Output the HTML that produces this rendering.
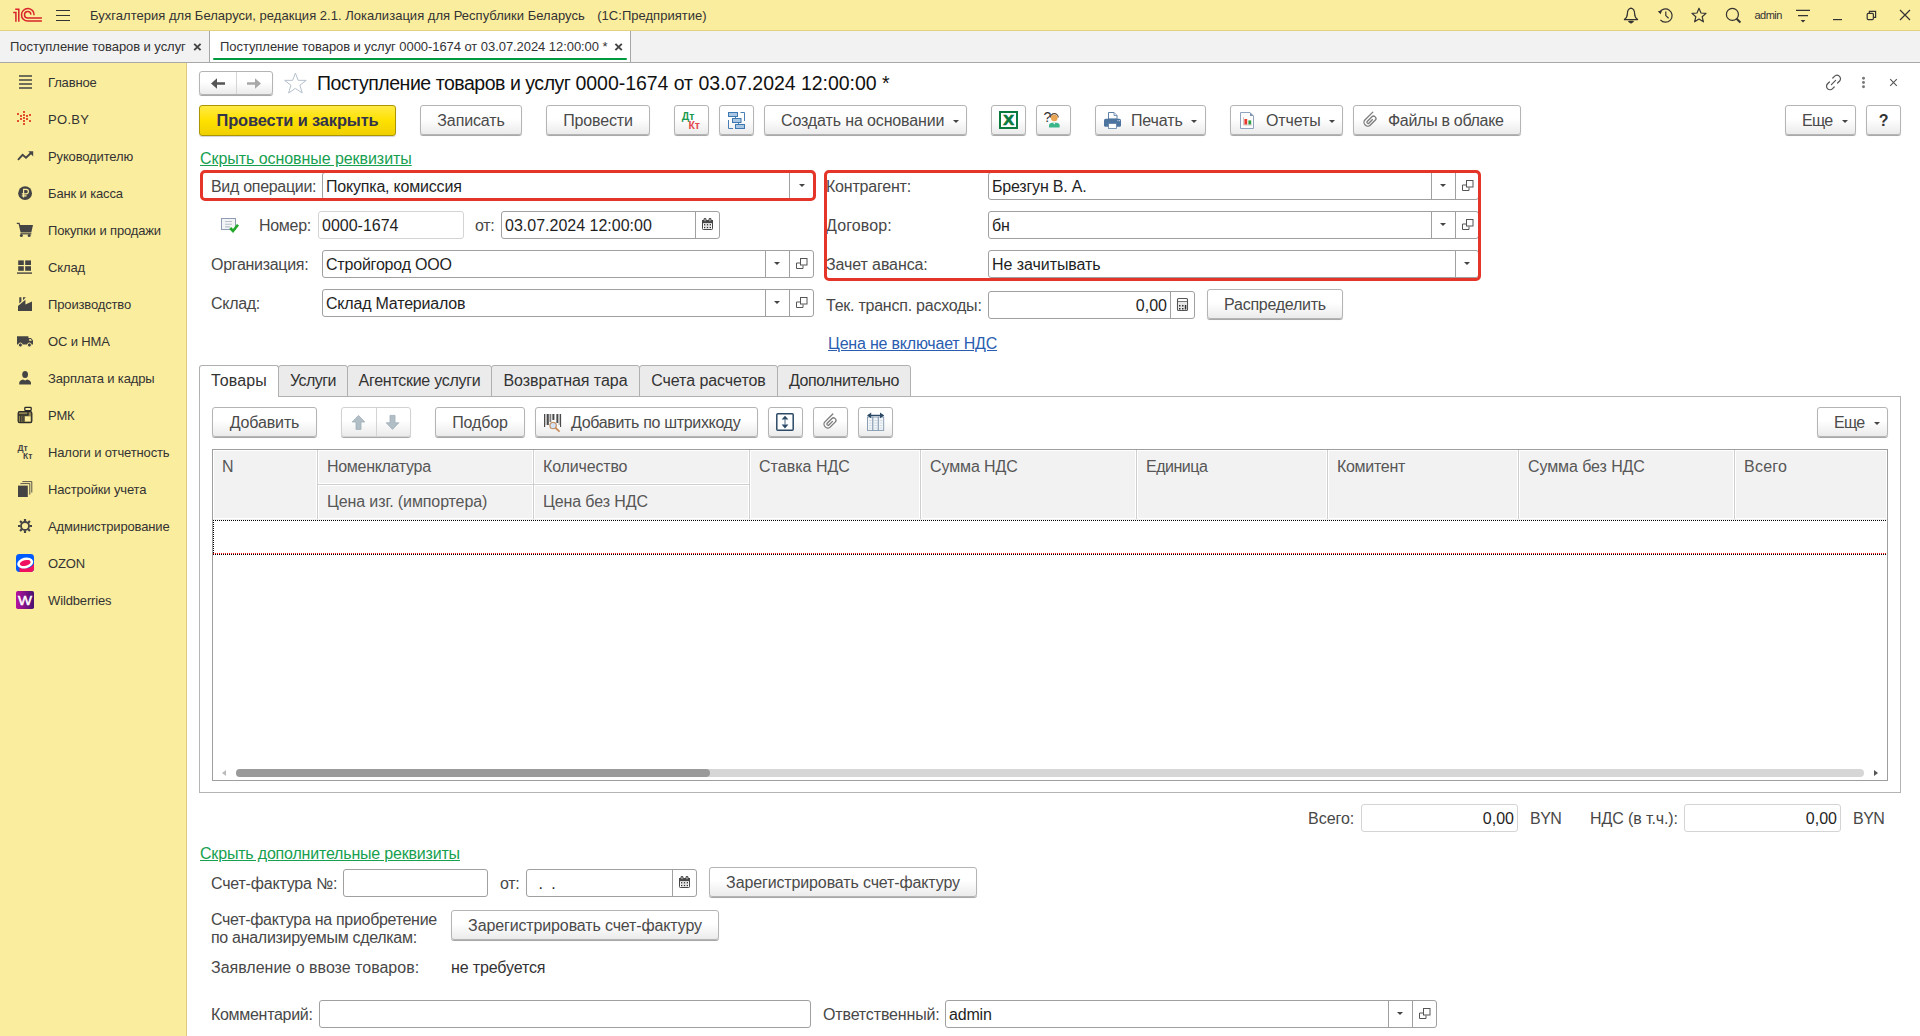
<!DOCTYPE html>
<html lang="ru">
<head>
<meta charset="utf-8">
<title>Поступление товаров и услуг</title>
<style>
*{box-sizing:border-box;margin:0;padding:0}
html,body{width:1920px;height:1036px;overflow:hidden;background:#fff}
body{font-family:"Liberation Sans",Arial,sans-serif;font-size:16px;letter-spacing:-0.13px;color:#333;position:relative}
.abs,.btn,.fld,.lbl,.t{position:absolute;white-space:nowrap}
#topbar{position:absolute;left:0;top:0;width:1920px;height:31px;background:#fbed9e;border-bottom:1px solid #e3d27e;letter-spacing:0}
#tabbar{position:absolute;left:0;top:31px;width:1920px;height:32px;background:#f2f2f2;border-bottom:1px solid #a8a8a8;letter-spacing:0}
#sidebar{position:absolute;left:0;top:63px;width:187px;height:973px;background:#fbed9e;border-right:1px solid #dccb7c;letter-spacing:0}
.t13{font-size:13px;color:#333}
.sb{position:absolute;left:48px;font-size:13px;color:#333;line-height:16px;white-space:nowrap;letter-spacing:-0.14px}
.ico{position:absolute}
.btn{height:30px;border:1px solid #b4b4b4;border-radius:3px;background:linear-gradient(#ffffff 0%,#ffffff 45%,#ebebeb 100%);box-shadow:0 1px 0 rgba(0,0,0,.26),0 1px 1px rgba(0,0,0,.12);color:#4a4a4a;text-align:center;line-height:29px}
.fld{height:28px;border:1px solid #a0a0a0;border-radius:3px;background:#fff;color:#1f1f1f;line-height:27px;padding-left:3px;letter-spacing:-0.2px;overflow:hidden}
.fld.lt{border-color:#d4d4d4}
.fld .sep{position:absolute;top:0;bottom:0;width:1px;background:#a0a0a0}
.lbl{line-height:29px;color:#484848;letter-spacing:-0.3px}
.lnk{position:absolute;white-space:nowrap;text-decoration:underline;line-height:18px}
.dd{position:absolute;width:0;height:0;border-left:3.5px solid transparent;border-right:3.5px solid transparent;border-top:3.5px solid #444}
.num{text-align:right;padding-right:3px;padding-left:0}
.hd{position:absolute;color:#575757;line-height:18px;white-space:nowrap;letter-spacing:-0.3px}
.vl{position:absolute;width:1px;background:#dcdcdc}
</style>
</head>
<body>
<div id="topbar">
<svg class="ico" style="left:0;top:0" width="80" height="31" viewBox="0 0 80 31" fill="none" stroke="#d8232a" stroke-width="1.5">
<path d="M15.2 9.3 H18.8 V21.8"/>
<path d="M13.2 12.4 H15.9 V21.8"/>
<path d="M34.1 15.2 A6.3 6.3 0 1 0 27.8 21.1 H41.9"/>
<path d="M30.9 14.6 A3.2 3.2 0 1 0 27.8 18 H41.9"/>
<path d="M56 10.5H70M56 15.5H70M56 20.5H70" stroke="#333" stroke-width="1.2"/>
</svg>
<div class="t t13" style="left:90px;top:8px;line-height:16px;letter-spacing:0.02px">Бухгалтерия для Беларуси, редакция 2.1. Локализация для Республики Беларусь<span style="margin-left:12.5px">(1С:Предприятие)</span></div>
<!-- bell -->
<svg class="ico" style="left:1623px;top:7px" width="16" height="17" viewBox="0 0 16 17" fill="none" stroke="#333" stroke-width="1.2" stroke-linejoin="round"><path d="M8 1.2 C5.2 1.8 4.4 4.2 4.4 6.6 C4.4 9.6 3 11.4 1.4 12.6 H14.6 C13 11.4 11.6 9.6 11.6 6.6 C11.6 4.2 10.8 1.8 8 1.2Z"/><path d="M5.8 14.4 H10.2 L8 16Z" fill="#333"/></svg>
<!-- history -->
<svg class="ico" style="left:1657px;top:7px" width="17" height="17" viewBox="0 0 17 17" fill="none" stroke="#333" stroke-width="1.2"><path d="M2.6 5.6 A6.6 6.6 0 1 1 3.4 12.8"/><path d="M8.8 4.4 V8.6 L11.6 11.2"/><path d="M0.8 4.2 L3.6 7.2 L5 3.4Z" fill="#333" stroke="none"/></svg>
<!-- star -->
<svg class="ico" style="left:1691px;top:7px" width="16" height="16" viewBox="0 0 16 16" fill="none" stroke="#333" stroke-width="1.2" stroke-linejoin="round"><path d="M8 1.2 L10 6 L15 6.4 L11.2 9.8 L12.4 14.8 L8 12.1 L3.6 14.8 L4.8 9.8 L1 6.4 L6 6Z"/></svg>
<!-- search -->
<svg class="ico" style="left:1725px;top:7px" width="17" height="17" viewBox="0 0 17 17" fill="none" stroke="#333" stroke-width="1.2"><circle cx="7.4" cy="7.4" r="6"/><path d="M11.6 11.8 L15.4 15.4" stroke-width="2"/></svg>
<div class="t" style="left:1754.5px;top:8px;font-size:11px;letter-spacing:-0.55px;line-height:14px;color:#333">admin</div>
<svg class="ico" style="left:1795px;top:8px" width="16" height="16" viewBox="0 0 16 16" stroke="#333" stroke-width="1.2"><path d="M1 2.4H15M3 7.6H13"/><path d="M5.6 12 H10.4 L8 14.6Z" fill="#333" stroke="none"/></svg>
<svg class="ico" style="left:1832px;top:14px" width="12" height="8" viewBox="0 0 12 8" stroke="#333" stroke-width="1.2"><path d="M1 5.6H10"/></svg>
<svg class="ico" style="left:1866px;top:10px" width="11" height="11" viewBox="0 0 11 11" fill="none" stroke="#333" stroke-width="1.2"><path d="M3.4 3.2 V1.4 H9.6 V7.4 H7.6"/><rect x="1.2" y="3.4" width="6.2" height="6.2" rx="1"/></svg>
<svg class="ico" style="left:1899px;top:9px" width="12" height="12" viewBox="0 0 12 12" stroke="#333" stroke-width="1.2"><path d="M1 1 L11 11 M11 1 L1 11"/></svg>
</div>
<div id="tabbar">
<div class="t t13" style="left:10px;top:8px;line-height:16px;letter-spacing:-0.06px">Поступление товаров и услуг</div>
<svg class="ico" style="left:193px;top:11px" width="10" height="10" viewBox="0 0 10 10" stroke="#444" stroke-width="1.9"><path d="M1.2 1.8L7.6 8.2M7.6 1.8L1.2 8.2"/></svg>
<div class="abs" style="left:209px;top:0;width:1px;height:31px;background:#a6a6a6"></div>
<div class="abs" style="left:210px;top:0;width:420px;height:31px;background:#fff"></div>
<div class="abs" style="left:630px;top:0;width:1px;height:31px;background:#a6a6a6"></div>
<div class="abs" style="left:213px;top:27px;width:414px;height:2px;background:#009a3e;border-radius:1px"></div>
<div class="t t13" style="left:220px;top:8px;line-height:16px;letter-spacing:-0.06px">Поступление товаров и услуг 0000-1674 от 03.07.2024 12:00:00 *</div>
<svg class="ico" style="left:613px;top:11px" width="11" height="10" viewBox="0 0 11 10" stroke="#444" stroke-width="1.9"><path d="M2.4 1.8L8.8 8.2M8.8 1.8L2.4 8.2"/></svg>
</div>
<div id="sidebar">
<svg class="ico" style="left:0;top:0" width="187" height="973" viewBox="0 63 187 973">
<g stroke="#444" stroke-width="1.6"><path d="M19 76H32M19 80H32M19 84H32M19 88H32"/></g>
<g fill="#e3502e"><rect x="23" y="111" width="2" height="2"/><rect x="17" y="113" width="2" height="2"/><rect x="29" y="114" width="2" height="2"/><rect x="20" y="115" width="2" height="2"/><rect x="23" y="114" width="2" height="2"/><rect x="26" y="115" width="2" height="2"/><rect x="23" y="117" width="2" height="2"/><rect x="20" y="118" width="2" height="2"/><rect x="26" y="118" width="2" height="2"/><rect x="17" y="120" width="2" height="2"/><rect x="23" y="120" width="2" height="2"/><rect x="29" y="120" width="2" height="2"/><rect x="23" y="123" width="2" height="2"/></g>
<g fill="none" stroke="#444" stroke-width="1.9"><path d="M18 159.8 L22.6 154.9 L26 157.8 L31.2 152.8"/></g>
<path d="M28.2 151.2 H33.2 V156.4Z" fill="#444"/>
<circle cx="25.1" cy="193.2" r="6.9" fill="#444"/>
<g fill="none" stroke="#fbed9e" stroke-width="1.2"><path d="M23.6 197.6 V189.4 H26.2 A2.2 2.2 0 0 1 26.2 193.8 H21.8 M21.8 195.8 H26.6"/></g>
<!-- cart -->
<g fill="#444"><path d="M16.8 222.8 H19.6 L20.2 225 H33 L31.3 232.4 H20.6 L18.6 224 H16.8Z"/><rect x="20.4" y="233.2" width="11" height="1.2"/><circle cx="21.4" cy="235.6" r="1.5"/><circle cx="29.2" cy="235.6" r="1.5"/></g>
<!-- sklad -->
<g fill="#444"><rect x="18.2" y="260.4" width="5.6" height="4.6"/><rect x="25.2" y="260.4" width="5.8" height="4.6"/><rect x="18.2" y="266.2" width="5.6" height="4.6"/><rect x="25.2" y="266.2" width="5.8" height="4.6"/><rect x="17" y="272.4" width="15" height="1.4"/></g>
<!-- factory -->
<g fill="#444"><path d="M18 311 V306 L25.4 299.8 V304.6 L32 301.6 V311Z"/><path d="M19.3 297.2 H21.4 V301.6 L19.3 303.6Z"/><path d="M23 297.2 H25.8 L23 300.2Z"/></g>
<!-- truck -->
<g fill="#444"><path d="M17 336.2 H28.4 V338 H31 L33 340.6 V344.4 H17Z"/><circle cx="20.4" cy="345" r="2" stroke="#fbed9e" stroke-width="0.9"/><circle cx="29.4" cy="345" r="2" stroke="#fbed9e" stroke-width="0.9"/></g>
<path d="M29.2 339 H30.6 L32 340.8 H29.2Z" fill="#fbed9e"/>
<!-- person -->
<g fill="#444"><ellipse cx="25.1" cy="374.4" rx="2.9" ry="3.5"/><path d="M19.2 384.6 V383 C19.2 381.2 21 380.4 23 379.6 L25.1 380.6 L27.2 379.6 C29.2 380.4 31 381.2 31 383 V384.6Z"/></g>
<!-- rmk -->
<g fill="none" stroke="#2a2a2a" stroke-width="1.3"><rect x="18.2" y="411.6" width="13.6" height="11" rx="1.6" fill="#8f8350"/><rect x="24.8" y="407.4" width="6.4" height="3.2" rx="0.8" fill="#fbed9e"/><path d="M18.6 415 H28 V412"/><path d="M28 410.6 V412"/></g>
<g fill="#fbed9e"><rect x="25" y="416.4" width="5.6" height="5"/></g>
<g stroke="#2a2a2a" stroke-width="0.9"><path d="M20.6 416 V421.8 M22.2 416 V421.8 M23.8 416 V421.8"/></g>
<!-- dt kt -->
<g fill="#444" font-family="Liberation Sans, sans-serif" font-weight="bold" font-size="8.5"><text x="17.4" y="451.4">Дт</text><text x="23" y="459">Кт</text></g>
<!-- pages -->
<g fill="none" stroke="#444" stroke-width="0.9"><path d="M22.4 481.6 H31.8 V492.6"/><path d="M20.4 483.6 H29.8 V494.6"/></g>
<rect x="18" y="485.6" width="9.8" height="11.4" fill="#444"/>
<!-- gear -->
<g fill="none" stroke="#444"><circle cx="25" cy="526" r="4" stroke-width="1.8"/><g stroke-width="2.2"><path d="M25 519 V521.4 M25 530.6 V533 M18 526 H20.4 M29.6 526 H32 M20.05 521.05 L21.75 522.75 M28.25 529.25 L29.95 530.95 M20.05 530.95 L21.75 529.25 M28.25 522.75 L29.95 521.05"/></g></g>
<!-- ozon -->
<defs><clipPath id="oz"><rect x="16" y="554" width="18" height="18" rx="3.4"/></clipPath>
<linearGradient id="wb" x1="0" y1="0" x2="1" y2="0"><stop offset="0" stop-color="#b7129f"/><stop offset="1" stop-color="#46126f"/></linearGradient></defs>
<g clip-path="url(#oz)"><rect x="16" y="554" width="18" height="18" fill="#005bff"/><path d="M34 563.6 C32 568 26 569.4 19.4 567.4 V572 H34Z" fill="#f1105f"/>
<ellipse cx="25.2" cy="563" rx="8.1" ry="5.3" transform="rotate(-14 25.2 563)" fill="#fff"/><ellipse cx="25.2" cy="563" rx="5.5" ry="2.9" transform="rotate(-14 25.2 563)" fill="#f1105f"/></g>
<!-- wb -->
<rect x="16" y="591" width="18" height="18" rx="1.8" fill="url(#wb)"/>
<text x="18" y="604.8" textLength="14" lengthAdjust="spacingAndGlyphs" font-family="Liberation Sans, sans-serif" font-size="13.4" fill="#fff" stroke="#fff" stroke-width="0.45">W</text>
</svg>
<div class="sb" style="top:12px">Главное</div>
<div class="sb" style="top:49px;letter-spacing:0.3px">PO.BY</div>
<div class="sb" style="top:86px">Руководителю</div>
<div class="sb" style="top:123px">Банк и касса</div>
<div class="sb" style="top:160px">Покупки и продажи</div>
<div class="sb" style="top:197px">Склад</div>
<div class="sb" style="top:234px">Производство</div>
<div class="sb" style="top:271px">ОС и НМА</div>
<div class="sb" style="top:308px">Зарплата и кадры</div>
<div class="sb" style="top:345px">РМК</div>
<div class="sb" style="top:382px">Налоги и отчетность</div>
<div class="sb" style="top:419px">Настройки учета</div>
<div class="sb" style="top:456px">Администрирование</div>
<div class="sb" style="top:493px">OZON</div>
<div class="sb" style="top:530px">Wildberries</div>
</div>
<div id="main">
<div class="btn" style="left:199px;top:71px;width:74px;height:24px"></div>
<div class="abs" style="left:236px;top:72px;width:1px;height:22px;background:#d5d5d5"></div>
<svg class="ico" style="left:209px;top:76px" width="18" height="15" viewBox="0 0 18 15"><path d="M16 6.2 H8 V2.3 L2 7.5 L8 12.7 V8.8 H16Z" fill="#555"/></svg>
<svg class="ico" style="left:245px;top:76px" width="18" height="15" viewBox="0 0 18 15"><path d="M2 6.2 H10 V2.3 L16 7.5 L10 12.7 V8.8 H2Z" fill="#a8a8a8"/></svg>
<svg class="ico" style="left:283px;top:71px" width="26" height="24" viewBox="0 0 26 24" fill="#fff" stroke="#b6c1cd" stroke-width="1" stroke-linejoin="miter"><path d="M12.4 2 L15.1 9.3 L23.2 9.4 L16.9 14.2 L19.2 22 L12.4 17.4 L5.6 22 L7.9 14.2 L1.6 9.4 L9.7 9.3Z"/></svg>
<div class="t" style="left:317px;top:71px;font-size:19.5px;letter-spacing:-0.04px;line-height:24px;color:#111"><span style="letter-spacing:-0.465px">Поступление товаров и услуг </span>0000-1674 от 03.07.2024 12:00:00 *</div>
<svg class="ico" style="left:1825px;top:74px" width="17" height="17" viewBox="0 0 17 17" fill="none" stroke="#555" stroke-width="1.2" stroke-linecap="round"><path d="M6.4 10.6 L10.6 6.4"/><path d="M7.8 4 L9.4 2.4 A3.1 3.1 0 0 1 14.6 7 L12.6 9"/><path d="M9.2 13 L7.6 14.6 A3.1 3.1 0 0 1 2.4 10 L4.4 8"/></svg>
<svg class="ico" style="left:1860px;top:75px" width="7" height="15" viewBox="0 0 7 15" fill="#777"><circle cx="3.5" cy="3.3" r="1.45"/><circle cx="3.5" cy="7.5" r="1.45"/><circle cx="3.5" cy="11.7" r="1.45"/></svg>
<svg class="ico" style="left:1888px;top:77px" width="11" height="11" viewBox="0 0 11 11" stroke="#555" stroke-width="1.1"><path d="M2.2 2.2L8.8 8.8M8.8 2.2L2.2 8.8"/></svg>
<div class="btn" style="left:199px;top:105px;width:197px;height:31px;background:linear-gradient(#ffea45 0%,#ffe100 50%,#efcf00 100%);border-color:#ab9500;font-weight:bold;font-size:16.4px;color:#33334d;line-height:28px;box-shadow:0 1px 1px rgba(0,0,60,.18);">Провести и закрыть</div>
<div class="btn" style="left:420px;top:105px;width:102px;height:30px;">Записать</div>
<div class="btn" style="left:546px;top:105px;width:104px;height:30px;">Провести</div>
<div class="btn" style="left:674px;top:105px;width:35px;height:30px;"></div>
<div class="btn" style="left:719px;top:105px;width:35px;height:30px;"></div>
<div class="btn" style="left:764px;top:105px;width:203px;height:30px;text-align:left;padding-left:16px;">Создать на основании<i class="dd" style="left:188px;top:14px;border-top-color:#444"></i></div>
<div class="btn" style="left:991px;top:105px;width:35px;height:30px;"></div>
<div class="btn" style="left:1036px;top:105px;width:35px;height:30px;"></div>
<div class="btn" style="left:1095px;top:105px;width:111px;height:30px;text-align:left;padding-left:35px;">Печать<i class="dd" style="left:95px;top:14px;border-top-color:#444"></i></div>
<div class="btn" style="left:1230px;top:105px;width:113px;height:30px;text-align:left;padding-left:35px;">Отчеты<i class="dd" style="left:98px;top:14px;border-top-color:#444"></i></div>
<div class="btn" style="left:1353px;top:105px;width:168px;height:30px;text-align:left;padding-left:34px;letter-spacing:-0.3px;">Файлы в облаке</div>
<div class="btn" style="left:1785px;top:105px;width:71px;height:30px;text-align:left;padding-left:16px;letter-spacing:-0.7px;">Еще<i class="dd" style="left:55.5px;top:14px;border-top-color:#444"></i></div>
<div class="btn" style="left:1866px;top:105px;width:35px;height:30px;font-weight:bold;color:#333;">?</div>
<svg class="ico" style="left:660px;top:100px" width="760" height="40" viewBox="660 100 760 40">
<g font-family="Liberation Sans, sans-serif" font-weight="bold" font-size="10.5" letter-spacing="0"><text x="681.8" y="120.4" fill="#1a9a50">Дт</text><text x="688.4" y="129" fill="#e5474c">Кт</text></g>
<!-- structure icon -->
<g fill="none" stroke="#4a7fb5" stroke-width="1"><path d="M740.5 112.5 H744.5 V121"/><path d="M728.5 120 V128.5 H733"/><path d="M735.5 116.5 V118 M738.5 122.5 V124.5"/></g>
<g fill="#a9c6e2" stroke="#3d78b0" stroke-width="1"><rect x="728.5" y="112.5" width="9" height="4"/><rect x="732.5" y="118.5" width="8.5" height="4"/><rect x="735.5" y="124.5" width="9" height="4"/></g>
<!-- excel -->
<rect x="1000" y="112" width="17" height="16" fill="#fff" stroke="#0b7a3e" stroke-width="2"/>
<text x="1003.2" y="125" textLength="10.6" lengthAdjust="spacingAndGlyphs" font-family="Liberation Sans, sans-serif" font-weight="bold" font-size="14" fill="#0b7a3e" stroke="#0b7a3e" stroke-width="0.7">X</text>
<!-- ? person -->
<text x="1043.4" y="122.4" font-family="Liberation Sans, sans-serif" font-size="14" fill="#333">?</text>
<path d="M1050.4 117.6 A3.9 3.9 0 0 1 1058.2 117.6" fill="none" stroke="#5a4632" stroke-width="1.3"/>
<circle cx="1054.3" cy="118" r="3.3" fill="#eaa552"/>
<path d="M1049 127.6 V125.2 C1049 123.2 1051 122.4 1054.3 122.4 C1057.6 122.4 1059.6 123.2 1059.6 125.2 V127.6Z" fill="#3bb68b"/>
<path d="M1053 122.4 L1054.3 124.4 L1055.6 122.4Z" fill="#fff"/>
<!-- printer -->
<path d="M1108.5 119 V112.5 H1114 L1117 115.5 V119Z" fill="#fff" stroke="#5d7fa8" stroke-width="1"/>
<path d="M1114 112.5 V115.5 H1117" fill="#dfe7f1" stroke="#5d7fa8" stroke-width="0.8"/>
<rect x="1104" y="118.8" width="17" height="8" rx="1.6" fill="#4d739f"/>
<rect x="1108.5" y="123.5" width="8" height="5" fill="#fff" stroke="#5d7fa8" stroke-width="0.8"/>
<rect x="1117.4" y="120.2" width="1" height="1" fill="#cfe0f3"/><rect x="1119" y="120.2" width="1" height="1" fill="#cfe0f3"/>
<!-- report -->
<path d="M1240.5 112.5 H1250 L1253.5 116 V128.5 H1240.5Z" fill="#fdfdfd" stroke="#8ea3bd" stroke-width="1"/>
<path d="M1250 112.5 V116 H1253.5Z" fill="#7f94ae"/>
<rect x="1244.4" y="119" width="2.8" height="5.6" fill="#e8392c"/><rect x="1248.4" y="120.4" width="2.8" height="4.2" fill="#2f9e44"/>
<path d="M1243.5 117 V125 H1252" fill="none" stroke="#b9a9a9" stroke-width="0.6"/>
<!-- paperclip -->
<g transform="translate(1370.2 120.0) rotate(45) scale(1.2 1.06)"><path d="M-3.1 -7 V3.6 A3.1 3.1 0 0 0 3.1 3.6 V-3.4 A2 2 0 0 0 -0.9 -3.4 V3 A1 1 0 0 0 1.1 3 V-1.8" fill="none" stroke="#7d7d7d" stroke-width="1.15" stroke-linecap="round"/></g>
</svg>

<div class="lnk" style="left:200px;top:150px;color:#16a050;letter-spacing:-0.06px">Скрыть основные реквизиты</div>
<div class="lbl" style="left:211px;top:172px">Вид операции:</div>
<div class="fld" style="left:322px;top:172px;width:492px;">Покупка, комиссия<i class="sep" style="left:466px"></i><i class="dd" style="left:475.5px;top:11px;border-top-color:#444"></i></div>
<svg class="ico" style="left:220px;top:216px" width="20" height="18" viewBox="0 0 20 18"><rect x="1.5" y="2.5" width="14" height="11" fill="#f3f4f6" stroke="#8d9cb4"/><path d="M5 5.5H12M5 8.2H12M5 10.9H10" stroke="#b9c0cc" stroke-width="1.1"/><path d="M10.2 12 L13 15 L18 8.8" fill="none" stroke="#22a82a" stroke-width="2.6"/></svg>
<div class="lbl" style="left:259px;top:211px">Номер:</div>
<div class="fld lt" style="left:318px;top:211px;width:146px;letter-spacing:0;">0000-1674</div>
<div class="lbl" style="left:475px;top:211px">от:</div>
<div class="fld" style="left:501px;top:211px;width:219px;letter-spacing:0;">03.07.2024 12:00:00<i class="sep" style="left:193px"></i><svg class="ico" style="left:199.0px;top:5px" width="13" height="14" viewBox="0 0 13 14"><rect x="1.5" y="3.5" width="10" height="9" rx="0.8" fill="#fff" stroke="#484848"/><rect x="1" y="3" width="11" height="3.2" fill="#484848"/><rect x="2.6" y="1" width="2.8" height="3.8" rx="1.3" fill="#484848"/><rect x="7.6" y="1" width="2.8" height="3.8" rx="1.3" fill="#484848"/><rect x="3.5" y="2.2" width="1" height="2" fill="#cfcfcf"/><rect x="8.5" y="2.2" width="1" height="2" fill="#cfcfcf"/><path d="M2.4 9H10.6M5.1 6.6V12M7.9 6.6V12" stroke="#d4d4d4" stroke-width="0.7"/><g fill="#333"><rect x="3" y="7.1" width="1.3" height="1.3"/><rect x="5.85" y="7.1" width="1.3" height="1.3"/><rect x="8.7" y="7.1" width="1.3" height="1.3"/><rect x="3" y="9.9" width="1.3" height="1.3"/><rect x="5.85" y="9.9" width="1.3" height="1.3"/><rect x="8.7" y="9.9" width="1.3" height="1.3"/></g></svg></div>
<div class="lbl" style="left:211px;top:250px">Организация:</div>
<div class="fld" style="left:322px;top:250px;width:492px;">Стройгород ООО<i class="sep" style="left:442px"></i><i class="sep" style="left:466px"></i><i class="dd" style="left:450.5px;top:11px;border-top-color:#444"></i><svg class="ico" style="left:472.0px;top:6px" width="14" height="13" viewBox="0 0 14 13" fill="none" stroke="#555" stroke-width="1"><path d="M5 6 H1.5 V11.5 H8 V8.5"/><rect x="5.5" y="1.5" width="6.5" height="6.5" fill="#fff"/></svg></div>
<div class="lbl" style="left:211px;top:289px">Склад:</div>
<div class="fld" style="left:322px;top:289px;width:492px;">Склад Материалов<i class="sep" style="left:442px"></i><i class="sep" style="left:466px"></i><i class="dd" style="left:450.5px;top:11px;border-top-color:#444"></i><svg class="ico" style="left:472.0px;top:6px" width="14" height="13" viewBox="0 0 14 13" fill="none" stroke="#555" stroke-width="1"><path d="M5 6 H1.5 V11.5 H8 V8.5"/><rect x="5.5" y="1.5" width="6.5" height="6.5" fill="#fff"/></svg></div>
<div class="lbl" style="left:826px;top:172px;letter-spacing:-0.2px">Контрагент:</div>
<div class="fld" style="left:988px;top:172px;width:491px;">Брезгун В. А.<i class="sep" style="left:442px"></i><i class="sep" style="left:466px"></i><i class="dd" style="left:451.0px;top:11px;border-top-color:#444"></i><svg class="ico" style="left:472.0px;top:6px" width="14" height="13" viewBox="0 0 14 13" fill="none" stroke="#555" stroke-width="1"><path d="M5 6 H1.5 V11.5 H8 V8.5"/><rect x="5.5" y="1.5" width="6.5" height="6.5" fill="#fff"/></svg></div>
<div class="lbl" style="left:826px;top:211px;letter-spacing:0.12px">Договор:</div>
<div class="fld" style="left:988px;top:211px;width:491px;">бн<i class="sep" style="left:442px"></i><i class="sep" style="left:466px"></i><i class="dd" style="left:451.0px;top:11px;border-top-color:#444"></i><svg class="ico" style="left:472.0px;top:6px" width="14" height="13" viewBox="0 0 14 13" fill="none" stroke="#555" stroke-width="1"><path d="M5 6 H1.5 V11.5 H8 V8.5"/><rect x="5.5" y="1.5" width="6.5" height="6.5" fill="#fff"/></svg></div>
<div class="lbl" style="left:826px;top:250px;letter-spacing:-0.1px">Зачет аванса:</div>
<div class="fld" style="left:988px;top:250px;width:491px;letter-spacing:-0.06px;">Не зачитывать<i class="sep" style="left:466px"></i><i class="dd" style="left:475.0px;top:11px;border-top-color:#444"></i></div>
<div class="lbl" style="left:826px;top:291px;letter-spacing:-0.24px">Тек. трансп. расходы:</div>
<div class="fld" style="left:988px;top:291px;width:207px;"><i class="sep" style="left:181px"></i><svg class="ico" style="left:187.0px;top:5px" width="13" height="15" viewBox="0 0 13 15"><rect x="1.5" y="1.5" width="10" height="12" rx="1" fill="#fff" stroke="#555" stroke-width="1.1"/><rect x="2.2" y="5" width="8.6" height="7.8" fill="#e6e6e6"/><path d="M2 4.5H11" stroke="#777" stroke-width="1"/><g fill="#2e2e2e"><rect x="3" y="8" width="1.5" height="1.5"/><rect x="6" y="8" width="1.5" height="1.5"/><rect x="3" y="11" width="1.5" height="1.5"/><rect x="6" y="11" width="1.5" height="1.5"/><rect x="8.8" y="8" width="1.5" height="4.5"/></g></svg><span class="abs" style="right:27px;top:0;letter-spacing:0">0,00</span></div>
<div class="btn" style="left:1207px;top:289px;width:136px;height:30px;letter-spacing:-0.25px;">Распределить</div>
<div class="lnk" style="left:828px;top:335px;color:#2a5db0;letter-spacing:-0.2px">Цена не включает НДС</div>
<div class="abs" style="left:200px;top:170px;width:616px;height:31px;border:3px solid #e53529;border-radius:5px"></div>
<div class="abs" style="left:824px;top:170px;width:657px;height:111px;border:3px solid #e53529;border-radius:5px"></div>
<div class="abs" style="left:199px;top:396px;width:1702px;height:397px;border:1px solid #b4b4b4"></div>
<div class="abs" style="left:199px;top:365px;width:80px;height:32px;border:1px solid #b0b0b0;border-bottom:none;border-radius:3px 3px 0 0;background:#fff;text-align:center;line-height:29px;color:#333;letter-spacing:0.12px">Товары</div>
<div class="abs" style="left:278px;top:365px;width:70px;height:32px;border:1px solid #b0b0b0;border-radius:3px 3px 0 0;background:#ebebeb;text-align:center;line-height:29px;color:#333;letter-spacing:-0.55px">Услуги</div>
<div class="abs" style="left:347px;top:365px;width:145px;height:32px;border:1px solid #b0b0b0;border-radius:3px 3px 0 0;background:#ebebeb;text-align:center;line-height:29px;color:#333;letter-spacing:-0.28px">Агентские услуги</div>
<div class="abs" style="left:491px;top:365px;width:149px;height:32px;border:1px solid #b0b0b0;border-radius:3px 3px 0 0;background:#ebebeb;text-align:center;line-height:29px;color:#333;letter-spacing:-0.04px">Возвратная тара</div>
<div class="abs" style="left:639px;top:365px;width:139px;height:32px;border:1px solid #b0b0b0;border-radius:3px 3px 0 0;background:#ebebeb;text-align:center;line-height:29px;color:#333;letter-spacing:-0.06px">Счета расчетов</div>
<div class="abs" style="left:777px;top:365px;width:134px;height:32px;border:1px solid #b0b0b0;border-radius:3px 3px 0 0;background:#ebebeb;text-align:center;line-height:29px;color:#333;letter-spacing:-0.39px">Дополнительно</div>
<div class="btn" style="left:212px;top:407px;width:105px;height:30px;">Добавить</div>
<div class="btn" style="left:341px;top:407px;width:70px;height:30px;border-color:#d2d2d2;"></div>
<div class="abs" style="left:376px;top:408px;width:1px;height:28px;background:#d4d4d4"></div>
<svg class="ico" style="left:350px;top:413px" width="17" height="18" viewBox="0 0 17 18" fill="#b2bec6" stroke="#9fadb8" stroke-width="0.8" stroke-linejoin="round"><path d="M8.5 2.4 L14.8 9 H11 V16.4 H6 V9 H2.2Z"/></svg>
<svg class="ico" style="left:384px;top:413px" width="17" height="18" viewBox="0 0 17 18" fill="#b2bec6" stroke="#9fadb8" stroke-width="0.8" stroke-linejoin="round"><path d="M8.5 16.4 L14.8 9.8 H11 V2.4 H6 V9.8 H2.2Z"/></svg>
<div class="btn" style="left:435px;top:407px;width:90px;height:30px;">Подбор</div>
<div class="btn" style="left:535px;top:407px;width:223px;height:30px;text-align:left;padding-left:35px;letter-spacing:-0.33px;">Добавить по штрихкоду</div>
<div class="btn" style="left:768px;top:407px;width:35px;height:30px;"></div>
<div class="btn" style="left:813px;top:407px;width:35px;height:30px;"></div>
<div class="btn" style="left:858px;top:407px;width:35px;height:30px;"></div>
<div class="btn" style="left:1817px;top:407px;width:71px;height:30px;text-align:left;padding-left:16px;letter-spacing:-0.7px;">Еще<i class="dd" style="left:55.5px;top:14px;border-top-color:#444"></i></div>
<svg class="ico" style="left:530px;top:400px" width="380" height="44" viewBox="530 400 380 44">
<!-- barcode -->
<g fill="#4a4a4a"><rect x="544" y="414" width="1.2" height="13"/><rect x="547" y="414" width="1.8" height="11"/><rect x="550.2" y="414" width="1" height="8"/><rect x="552.4" y="414" width="2" height="6"/><rect x="556.4" y="414" width="2" height="9"/><rect x="560" y="414" width="1.1" height="13"/></g>
<g fill="#bdbdbd"><rect x="545.2" y="414" width="1.8" height="11"/><rect x="549" y="414" width="1.2" height="8"/><rect x="558.4" y="414" width="1.6" height="11"/></g>
<circle cx="553.1" cy="425.5" r="3.2" fill="#d3e3f8" stroke="#c9976c" stroke-width="1.3"/>
<path d="M555.6 428 L559 431.2" stroke="#c98f5e" stroke-width="1.8" stroke-linecap="round"/>
<!-- expand icon -->
<rect x="776.8" y="413.8" width="16.4" height="16.4" rx="1" fill="#fff" stroke="#2c4a66" stroke-width="1.5"/>
<path d="M785 415.8 L788.4 419.6 H781.6Z M785 428.4 L788.4 424.6 H781.6Z" fill="#2c4a66"/>
<path d="M785 419 V425" stroke="#6b8197" stroke-width="1.2"/>
<!-- paperclip -->
<g transform="translate(830.2 421.8) rotate(45) scale(1.2 1.06)"><path d="M-3.1 -7 V3.6 A3.1 3.1 0 0 0 3.1 3.6 V-3.4 A2 2 0 0 0 -0.9 -3.4 V3 A1 1 0 0 0 1.1 3 V-1.8" fill="none" stroke="#7d7d7d" stroke-width="1.15" stroke-linecap="round"/></g>
<!-- columns icon -->
<g fill="#f3f6f9" stroke="#7f96ad" stroke-width="0.9"><rect x="867.5" y="417" width="5.4" height="13.4"/><rect x="872.9" y="417" width="5.4" height="13.4"/><rect x="878.3" y="417" width="5.4" height="13.4"/></g>
<g stroke="#c3cedb" stroke-width="0.7"><path d="M869 420.5H871.6M869 423H871.6M869 425.5H871.6M869 428H871.6M874.3 420.5H877M874.3 423H877M874.3 425.5H877M874.3 428H877M879.7 420.5H882.4M879.7 423H882.4M879.7 425.5H882.4M879.7 428H882.4"/></g>
<path d="M868 415.4 H883.2" stroke="#2c4a66" stroke-width="1.3"/>
<path d="M867 415.4 L871.2 412.6 V418.2Z M884.2 415.4 L880 412.6 V418.2Z" fill="#2c4a66"/>
</svg>

<div class="abs" style="left:212px;top:449px;width:1676px;height:332px;border:1px solid #9e9e9e;background:#fff"></div>
<div class="abs" style="left:213px;top:450px;width:1674px;height:69px;background:#cfcfcf"></div>
<div class="abs" style="left:213px;top:450px;width:104px;height:69px;background:#f2f2f2;border:1px solid #fff"></div>
<div class="abs" style="left:318px;top:450px;width:215px;height:34px;background:#f2f2f2;border:1px solid #fff"></div>
<div class="abs" style="left:318px;top:485px;width:215px;height:34px;background:#f2f2f2;border:1px solid #fff"></div>
<div class="abs" style="left:534px;top:450px;width:215px;height:34px;background:#f2f2f2;border:1px solid #fff"></div>
<div class="abs" style="left:534px;top:485px;width:215px;height:34px;background:#f2f2f2;border:1px solid #fff"></div>
<div class="abs" style="left:750px;top:450px;width:170px;height:69px;background:#f2f2f2;border:1px solid #fff"></div>
<div class="abs" style="left:921px;top:450px;width:215px;height:69px;background:#f2f2f2;border:1px solid #fff"></div>
<div class="abs" style="left:1137px;top:450px;width:190px;height:69px;background:#f2f2f2;border:1px solid #fff"></div>
<div class="abs" style="left:1328px;top:450px;width:190px;height:69px;background:#f2f2f2;border:1px solid #fff"></div>
<div class="abs" style="left:1519px;top:450px;width:215px;height:69px;background:#f2f2f2;border:1px solid #fff"></div>
<div class="abs" style="left:1735px;top:450px;width:152px;height:69px;background:#f2f2f2;border:1px solid #fff"></div>
<div class="hd" style="left:222px;top:458px;letter-spacing:0px">N</div>
<div class="hd" style="left:327px;top:458px;letter-spacing:-0.3px">Номенклатура</div>
<div class="hd" style="left:327px;top:493px;letter-spacing:-0.11px">Цена изг. (импортера)</div>
<div class="hd" style="left:543px;top:458px;letter-spacing:-0.16px">Количество</div>
<div class="hd" style="left:543px;top:493px;letter-spacing:-0.11px">Цена без НДС</div>
<div class="hd" style="left:759px;top:458px;letter-spacing:0.02px">Ставка НДС</div>
<div class="hd" style="left:930px;top:458px;letter-spacing:-0.1px">Сумма НДС</div>
<div class="hd" style="left:1146px;top:458px;letter-spacing:-0.5px">Единица</div>
<div class="hd" style="left:1337px;top:458px;letter-spacing:-0.3px">Комитент</div>
<div class="hd" style="left:1528px;top:458px;letter-spacing:-0.09px">Сумма без НДС</div>
<div class="hd" style="left:1744px;top:458px;letter-spacing:0.24px">Всего</div>
<div class="abs" style="left:213px;top:519px;width:1674px;height:1px;background:#ececec"></div>
<div class="abs" style="left:213px;top:520px;width:1674px;height:1px;background:repeating-linear-gradient(90deg,#000 0 1px,transparent 1px 2px)"></div>
<div class="abs" style="left:213px;top:520px;width:1px;height:35px;background:repeating-linear-gradient(180deg,#000 0 1px,transparent 1px 2px)"></div>
<div class="abs" style="left:213px;top:553px;width:1674px;height:1px;background:repeating-linear-gradient(90deg,#f00 0 1px,transparent 1px 2px)"></div>
<div class="abs" style="left:213px;top:554px;width:1674px;height:1px;background:repeating-linear-gradient(90deg,#000 0 1px,transparent 1px 2px)"></div>
<div class="abs" style="left:236px;top:769px;width:1628px;height:8px;border-radius:4px;background:#d6d6d6"></div>
<div class="abs" style="left:236px;top:769px;width:474px;height:8px;border-radius:4px;background:#9a9a9a"></div>
<div class="abs" style="left:222px;top:770px;width:0;height:0;border-top:3px solid transparent;border-bottom:3px solid transparent;border-right:4px solid #bbb"></div>
<div class="abs" style="left:1874px;top:770px;width:0;height:0;border-top:3px solid transparent;border-bottom:3px solid transparent;border-left:4px solid #555"></div>
<div class="lbl" style="left:1308px;top:804px;letter-spacing:-0.02px">Всего:</div>
<div class="fld lt num" style="left:1361px;top:804px;width:157px;letter-spacing:0;">0,00</div>
<div class="lbl" style="left:1530px;top:804px;letter-spacing:-0.5px">BYN</div>
<div class="lbl" style="left:1590px;top:804px;letter-spacing:-0.1px">НДС (в т.ч.):</div>
<div class="fld lt num" style="left:1684px;top:804px;width:157px;letter-spacing:0;">0,00</div>
<div class="lbl" style="left:1853px;top:804px;letter-spacing:-0.5px">BYN</div>
<div class="lnk" style="left:200px;top:845px;color:#16a050;letter-spacing:-0.19px">Скрыть дополнительные реквизиты</div>
<div class="lbl" style="left:211px;top:869px;letter-spacing:-0.2px">Счет-фактура №:</div>
<div class="fld" style="left:343px;top:869px;width:145px;"></div>
<div class="lbl" style="left:500px;top:869px">от:</div>
<div class="fld" style="left:526px;top:869px;width:171px;">&nbsp;&nbsp;.&nbsp;&nbsp;.<i class="sep" style="left:145px"></i><svg class="ico" style="left:151.0px;top:5px" width="13" height="14" viewBox="0 0 13 14"><rect x="1.5" y="3.5" width="10" height="9" rx="0.8" fill="#fff" stroke="#484848"/><rect x="1" y="3" width="11" height="3.2" fill="#484848"/><rect x="2.6" y="1" width="2.8" height="3.8" rx="1.3" fill="#484848"/><rect x="7.6" y="1" width="2.8" height="3.8" rx="1.3" fill="#484848"/><rect x="3.5" y="2.2" width="1" height="2" fill="#cfcfcf"/><rect x="8.5" y="2.2" width="1" height="2" fill="#cfcfcf"/><path d="M2.4 9H10.6M5.1 6.6V12M7.9 6.6V12" stroke="#d4d4d4" stroke-width="0.7"/><g fill="#333"><rect x="3" y="7.1" width="1.3" height="1.3"/><rect x="5.85" y="7.1" width="1.3" height="1.3"/><rect x="8.7" y="7.1" width="1.3" height="1.3"/><rect x="3" y="9.9" width="1.3" height="1.3"/><rect x="5.85" y="9.9" width="1.3" height="1.3"/><rect x="8.7" y="9.9" width="1.3" height="1.3"/></g></svg></div>
<div class="btn" style="left:709px;top:867px;width:268px;height:30px;">Зарегистрировать счет-фактуру</div>
<div class="lbl" style="left:211px;top:911px;line-height:18px">Счет-фактура на приобретение<br>по анализируемым сделкам:</div>
<div class="btn" style="left:451px;top:910px;width:268px;height:30px;">Зарегистрировать счет-фактуру</div>
<div class="lbl" style="left:211px;top:953px;letter-spacing:0">Заявление о ввозе товаров:</div>
<div class="lbl" style="left:451px;top:953px;color:#333;letter-spacing:-0.13px">не требуется</div>
<div class="lbl" style="left:211px;top:1000px">Комментарий:</div>
<div class="fld" style="left:319px;top:1000px;width:492px;"></div>
<div class="lbl" style="left:823px;top:1000px;letter-spacing:-0.15px">Ответственный:</div>
<div class="fld" style="left:945px;top:1000px;width:492px;">admin<i class="sep" style="left:442px"></i><i class="sep" style="left:466px"></i><i class="dd" style="left:450.5px;top:11px;border-top-color:#444"></i><svg class="ico" style="left:472.0px;top:6px" width="14" height="13" viewBox="0 0 14 13" fill="none" stroke="#555" stroke-width="1"><path d="M5 6 H1.5 V11.5 H8 V8.5"/><rect x="5.5" y="1.5" width="6.5" height="6.5" fill="#fff"/></svg></div>
</div>
</body>
</html>
